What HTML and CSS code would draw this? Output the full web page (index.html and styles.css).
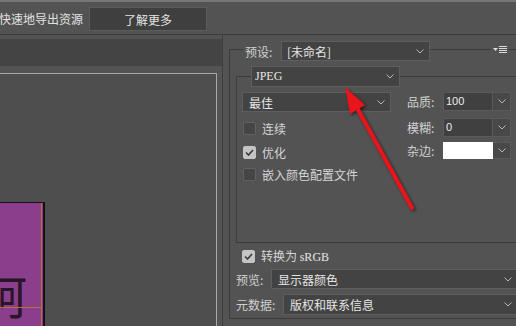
FILE: index.html
```html
<!DOCTYPE html>
<html lang="zh">
<head>
<meta charset="utf-8">
<title>导出</title>
<link rel="stylesheet" href="styles.css">
</head>
<body>
<div class="app">
  <div class="topbar">
    <span class="top-text">快速地导出资源</span>
    <button class="learn">了解更多</button>
  </div>
  <div class="main">
    <div class="left">
      <div class="left-head"></div>
      <div class="canvas">
        <div class="art">
          <span class="art-char">呵</span>
          <span class="guide-v"></span>
          <span class="guide-h"></span>
        </div>
      </div>
    </div>
    <div class="right">
      <div class="outer">
        <div class="outer-head">
          <span class="corner"></span>
          <span class="lbl preset-lbl">预设:</span>
          <div class="dd dd-preset"><span>[未命名]</span><svg class="chev" width="8" height="5" viewBox="0 0 8 5"><polyline points="0.5,0.5 4,4 7.5,0.5"/></svg></div>
          <span class="line"></span>
          <svg class="menu-icon" width="14" height="9" viewBox="0 0 14 9"><polygon points="0,3 5,3 2.5,6" fill="#dcdcdc"/><rect x="6" y="1" width="8" height="1" fill="#dcdcdc"/><rect x="6" y="3" width="8" height="1" fill="#dcdcdc"/><rect x="6" y="5" width="8" height="1" fill="#dcdcdc"/><rect x="6" y="7" width="8" height="1" fill="#dcdcdc"/></svg>
          <span class="line line-end"></span>
        </div>
        <div class="outer-body">
          <div class="inner">
            <div class="inner-head">
              <span class="corner corner-inner"></span>
              <div class="dd dd-format"><span class="serif">JPEG</span><svg class="chev" width="8" height="5" viewBox="0 0 8 5"><polyline points="0.5,0.5 4,4 7.5,0.5"/></svg></div>
              <span class="line line-inner"></span>
            </div>
            <div class="inner-body">
              <div class="col-left">
                <div class="dd dd-quality"><span>最佳</span><svg class="chev" width="8" height="5" viewBox="0 0 8 5"><polyline points="0.5,0.5 4,4 7.5,0.5"/></svg></div>
                <div class="check c1"><span class="box"></span><span>连续</span></div>
                <div class="check c2"><span class="box on"><svg width="9" height="7" viewBox="0 0 9 7"><polyline points="1,3.5 3.5,6 8,1"/></svg></span><span>优化</span></div>
                <div class="check c3"><span class="box"></span><span>嵌入颜色配置文件</span></div>
              </div>
              <div class="col-right">
                <div class="field f1"><span class="lbl flbl">品质:</span><span class="num">100</span><span class="spin"><svg class="chev" width="8" height="5" viewBox="0 0 8 5"><polyline points="0.5,0.5 4,4 7.5,0.5"/></svg></span></div>
                <div class="field f2"><span class="lbl flbl">模糊:</span><span class="num">0</span><span class="spin"><svg class="chev" width="8" height="5" viewBox="0 0 8 5"><polyline points="0.5,0.5 4,4 7.5,0.5"/></svg></span></div>
                <div class="field f3"><span class="lbl flbl">杂边:</span><span class="num swatch"></span><span class="spin"><svg class="chev" width="8" height="5" viewBox="0 0 8 5"><polyline points="0.5,0.5 4,4 7.5,0.5"/></svg></span></div>
              </div>
            </div>
          </div>
          <div class="check srgb"><span class="box on"><svg width="9" height="7" viewBox="0 0 9 7"><polyline points="1,3.5 3.5,6 8,1"/></svg></span><span>转换为 <span class="serif">sRGB</span></span></div>
          <div class="row r-preview"><span class="lbl w-preview">预览:</span><div class="dd dd-preview"><span>显示器颜色</span><svg class="chev" width="8" height="5" viewBox="0 0 8 5"><polyline points="0.5,0.5 4,4 7.5,0.5"/></svg></div></div>
          <div class="row r-meta"><span class="lbl w-meta">元数据:</span><div class="dd dd-meta"><span>版权和联系信息</span><svg class="chev" width="8" height="5" viewBox="0 0 8 5"><polyline points="0.5,0.5 4,4 7.5,0.5"/></svg></div></div>
        </div>
      </div>
    </div>
  </div>
  <svg class="arrow" width="516" height="326" viewBox="0 0 516 326">
    <defs>
      <filter id="sh" x="-20%" y="-20%" width="140%" height="140%">
        <feDropShadow dx="1.5" dy="1.5" stdDeviation="1.6" flood-color="#000" flood-opacity="0.6"/>
      </filter>
    </defs>
    <g filter="url(#sh)">
      <line x1="412" y1="208" x2="356" y2="106" stroke="#e8121a" stroke-width="4" stroke-linecap="round"/>
      <polygon points="345,87 365,105 350,114" fill="#e8121a"/>
    </g>
  </svg>
</div>
</body>
</html>
```
FILE: styles.css
```css
html, body {
  margin: 0;
  padding: 0;
}
body {
  background: #535353;
  font-family: "Noto Sans CJK SC", "Noto Sans", sans-serif;
  font-size: 12px;
  color: #d4d4d4;
  width: 516px;
  height: 326px;
  overflow: hidden;
}
.app {
  position: relative;
  width: 516px;
  height: 326px;
  overflow: hidden;
}
.topbar {
  box-sizing: border-box;
  height: 35px;
  border-top: 2px solid #767676;
  border-bottom: 1px solid #3b3b3b;
  display: flex;
  align-items: flex-start;
  padding-top: 5px;
}
.top-text {
  margin-left: -1px;
  line-height: 24px;
  color: #e2e2e2;
  white-space: nowrap;
}
.learn {
  box-sizing: border-box;
  margin-left: 6px;
  width: 118px;
  height: 24px;
  background: #3f3f3f;
  border: 1px solid #5c5c5c;
  color: #e4e4e4;
  font-family: inherit;
  font-size: 12px;
  padding: 0;
}
.main {
  display: flex;
  height: 291px;
}
.left {
  width: 222px;
  flex: none;
  padding-top: 4px;
  display: flex;
  flex-direction: column;
  gap: 7px;
}
.left-head {
  height: 27px;
  background: #444444;
}
.canvas {
  flex: 1;
  width: 216px;
  border-top: 1px solid #a8a8a8;
  border-right: 1px solid #a8a8a8;
  background: #4e4e4e;
  display: flex;
  flex-direction: column;
}
.art {
  position: relative;
  margin-top: 128px;
  width: 43px;
  flex: 1;
  background: #8a3e8b;
  border-top: 1px solid #151015;
  border-right: 2px solid #151015;
  overflow: hidden;
}
.art-char {
  display: block;
  margin-left: -19px;
  margin-top: 68px;
  font-size: 46px;
  line-height: 46px;
  color: #2a1428;
  white-space: nowrap;
}
.guide-v {
  position: absolute;
  left: 41px;
  top: 0;
  bottom: 0;
  width: 1px;
  background: #b8703e;
}
.guide-h {
  position: absolute;
  left: 0;
  top: 104px;
  width: 41px;
  height: 1px;
  background: #b8703e;
}
.right {
  flex: 1;
  border-left: 1px solid #3e3e3e;
  padding-left: 6px;
  padding-top: 6px;
  overflow: hidden;
}
.outer {
  width: 300px;
}
.outer-head {
  display: flex;
  align-items: center;
  height: 20px;
}
.corner {
  flex: none;
  align-self: stretch;
  margin-top: 8px;
  width: 13px;
  border-top: 1px solid #3c3c3c;
  border-left: 1px solid #3c3c3c;
}
.lbl {
  flex: none;
  color: #d0d0d0;
  white-space: nowrap;
}
.preset-lbl {
  margin-left: 2px;
  width: 36px;
}
.dd {
  flex: none;
  box-sizing: border-box;
  display: flex;
  align-items: center;
  justify-content: space-between;
  background: #434343;
  border: 1px solid #5e5e5e;
  padding: 0 5px 0 6px;
  color: #e6e6e6;
  white-space: nowrap;
}
.chev {
  flex: none;
}
.chev polyline {
  fill: none;
  stroke: #b8b8b8;
  stroke-width: 1;
}
.dd-preset {
  width: 149px;
  height: 20px;
  padding-left: 5px;
}
.line {
  flex: 1;
  align-self: flex-start;
  margin-top: 8px;
  border-top: 1px solid #3c3c3c;
}
.menu-icon {
  flex: none;
  align-self: flex-start;
  margin: 4px 2px 0 2px;
}
.line-end {
  flex: 0 0 20px;
}
.outer-body {
  border-left: 1px solid #3c3c3c;
  border-bottom: 1px solid #3c3c3c;
  padding: 5px 0 3px 6px;
}
.inner-head {
  display: flex;
  align-items: center;
  height: 21px;
}
.corner-inner {
  width: 14px;
  margin-top: 10px;
}
.dd-format {
  width: 149px;
  height: 21px;
  padding-left: 3px;
}
.serif {
  font-family: "Liberation Serif", "DejaVu Serif", serif;
  font-size: 12px;
  color: #e6e6e6;
}
.line-inner {
  margin-top: 10px;
}
.inner-body {
  box-sizing: border-box;
  height: 156px;
  border-left: 1px solid #3c3c3c;
  border-bottom: 1px solid #3c3c3c;
  padding: 5px 0 0 5px;
  display: flex;
}
.col-left {
  width: 149px;
  display: flex;
  flex-direction: column;
}
.dd-quality {
  width: 149px;
  height: 20px;
}
.check {
  display: flex;
  align-items: center;
  height: 22px;
  color: #d6d6d6;
  white-space: nowrap;
}
.c1 { margin-top: 5px; }
.c2 { margin-top: 2px; }
.c3 { margin-top: 0; }
.box {
  flex: none;
  box-sizing: border-box;
  width: 13px;
  height: 13px;
  margin-left: 1px;
  margin-right: 6px;
  border-radius: 2px;
  background: #454545;
  border: 1px solid #626262;
  display: flex;
  align-items: center;
  justify-content: center;
}
.box.on {
  background: #c4c4c4;
  border-color: #c4c4c4;
}
.box.on polyline {
  fill: none;
  stroke: #3a3a3a;
  stroke-width: 1.6;
}
.col-right {
  margin-left: 16px;
  display: flex;
  flex-direction: column;
}
.field {
  display: flex;
  align-items: stretch;
  height: 19px;
}
.f2 { margin-top: 7px; }
.f3 { margin-top: 5px; height: 17px; }
.flbl {
  width: 36px;
  line-height: 19px;
}
.f3 .flbl { line-height: 17px; }
.num {
  box-sizing: border-box;
  width: 50px;
  background: #404040;
  border: 1px solid #5a5a5a;
  padding-left: 2px;
  font-family: "Liberation Sans", "Noto Sans", sans-serif;
  font-size: 11px;
  line-height: 17px;
  color: #ececec;
}
.num.swatch {
  background: #ffffff;
  border-color: #ffffff;
}
.spin {
  box-sizing: border-box;
  width: 18px;
  background: #484848;
  border: 1px solid #5a5a5a;
  border-left: none;
  display: flex;
  align-items: center;
  justify-content: center;
}
.srgb {
  margin-top: 3px;
  height: 20px;
}
.srgb .box {
  margin-left: 6px;
  margin-right: 6px;
}
.row {
  display: flex;
  align-items: center;
}
.r-preview {
  margin-top: 3px;
  height: 20px;
}
.r-meta {
  margin-top: 5px;
  height: 21px;
}
.w-preview { width: 35px; }
.w-meta { width: 47px; }
.dd-preview {
  width: 246px;
  height: 20px;
  padding-right: 4px;
}
.dd-meta {
  width: 234px;
  height: 21px;
  padding-right: 4px;
}
.arrow {
  position: absolute;
  left: 0;
  top: 0;
  pointer-events: none;
}
```
